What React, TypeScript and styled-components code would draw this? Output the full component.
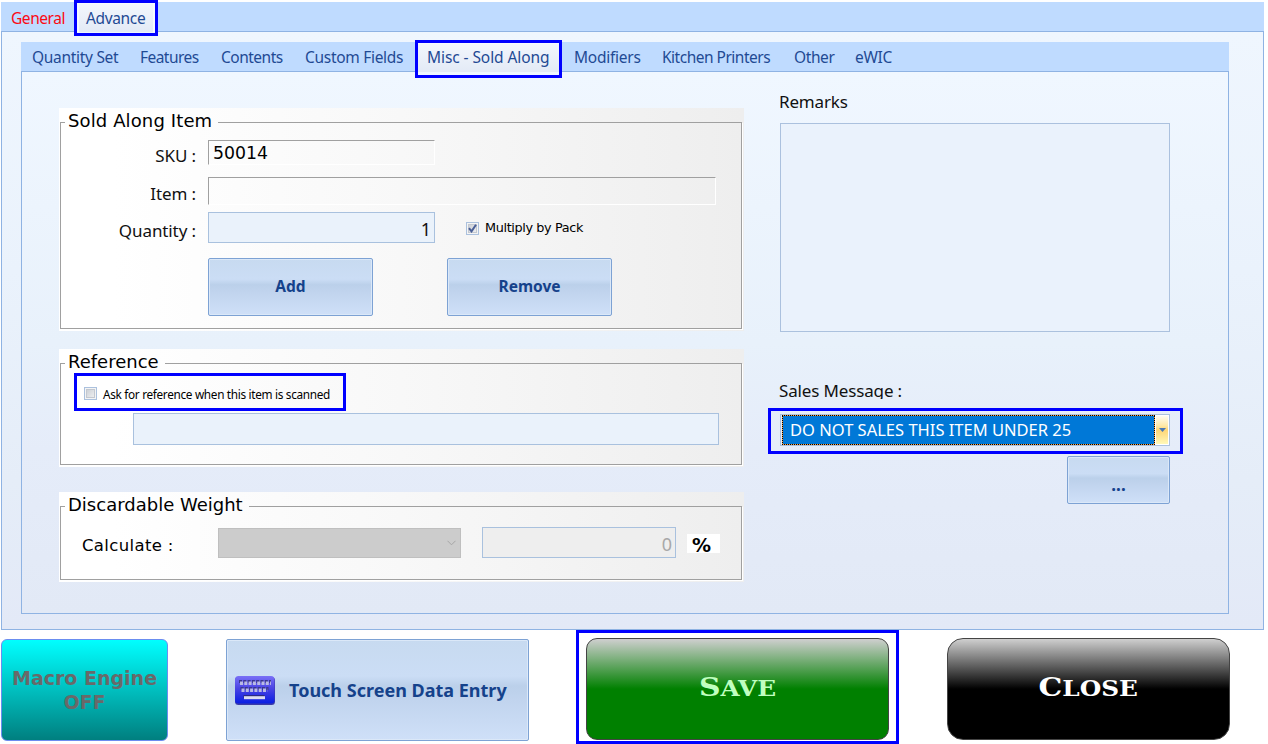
import React from 'react';
import styled, { createGlobalStyle, css } from 'styled-components';

const segoe = `'Noto Sans', 'Open Sans', sans-serif`;
const verdana = `'DejaVu Sans', sans-serif`;

const mainTabs = [
  { title: 'General', width: 76, pad: 10, ls: -0.45, alert: true },
  { title: 'Advance', width: 78, pad: 9, ls: -0.35, active: true },
];

const subTabs = [
  { title: 'Quantity Set', width: 108, pad: 11, ls: -0.3 },
  { title: 'Features', width: 81, pad: 11, ls: -0.55 },
  { title: 'Contents', width: 84, pad: 11, ls: -0.5 },
  { title: 'Custom Fields', width: 121, pad: 11, ls: -0.3 },
  { title: 'Misc - Sold Along', width: 147, pad: 12, ls: -0.08, active: true },
  { title: 'Modifiers', width: 89, pad: 12, ls: -0.25 },
  { title: 'Kitchen Printers', width: 132, pad: 11, ls: -0.5 },
  { title: 'Other', width: 61, pad: 11, ls: -0.4 },
  { title: 'eWIC', width: 59, pad: 11, ls: -0.3 },
];

const KeyboardIcon = () => (
  <svg width="42" height="32" viewBox="0 0 42 32">
    <defs>
      <linearGradient id="keys" x1="0" y1="0" x2="0" y2="1">
        <stop offset="0" stopColor="#7a70f6" />
        <stop offset="0.45" stopColor="#4a44e4" />
        <stop offset="1" stopColor="#0a1ee2" />
      </linearGradient>
    </defs>
    <rect x="1" y="3" width="40" height="28" rx="3.5" fill="#3a3aa8" />
    <rect x="1" y="2" width="39.5" height="27.5" rx="3.5" fill="url(#keys)" />
    <g stroke="#3a388e" strokeWidth="3" strokeDasharray="3 1.3">
      <path d="M5 7.500h32" />
      <path d="M6.500 14.500h28" />
    </g>
    <g stroke="#b9bae4" strokeWidth="3.4" strokeDasharray="3 1.3">
      <path d="M6 9.200h31" />
      <path d="M7.500 16.200h26" />
    </g>
    <path d="M9.500 22.500h21" stroke="#2b2a80" strokeWidth="3" />
    <path d="M10 23.700h21" stroke="#dcdcf2" strokeWidth="3" />
  </svg>
);

const CheckMark = () => (
  <svg width="9" height="9" viewBox="0 0 9 9">
    <path
      d="M1 4.200 L3.500 7.400 L8 0.800"
      fill="none"
      stroke="#4a5f97"
      strokeWidth="2"
    />
  </svg>
);

const App: React.FC = () => {
  return (
    <Screen>
      <GlobalStyle />
      <MainTabs>
        <TabBar>
          {mainTabs.map(tab => (
            <Tab
              key={tab.title}
              $width={tab.width}
              $pad={tab.pad}
              $ls={tab.ls}
              $active={tab.active}
              $alert={tab.alert}
            >
              {tab.title}
            </Tab>
          ))}
        </TabBar>
        <MainPanel>
          <TabBar>
            {subTabs.map(tab => (
              <Tab
                key={tab.title}
                $width={tab.width}
                $pad={tab.pad}
                $ls={tab.ls}
                $active={tab.active}
                $sub
              >
                {tab.title}
              </Tab>
            ))}
          </TabBar>
          <SubPanel>
            <LeftColumn>
              <Group $height={223} $gap={18}>
                <Frame>
                  <Legend $ls={0.12}>Sold Along Item</Legend>
                  <Row $top={4} $height={25}>
                    <Label $drop={4}>SKU :</Label>
                    <SunkenField $width={227}>50014</SunkenField>
                  </Row>
                  <Row $top={12} $height={28}>
                    <Label $drop={5}>Item :</Label>
                    <SunkenField $width={508} />
                  </Row>
                  <Row $top={7} $height={31}>
                    <Label $drop={7}>Quantity :</Label>
                    <Field $width={227}>1</Field>
                    <PackCheck>
                      <CheckBox>
                        <CheckMark />
                      </CheckBox>
                      <PackText>Multiply by Pack</PackText>
                    </PackCheck>
                  </Row>
                  <ButtonRow>
                    <Button $width={165}>Add</Button>
                    <Button $width={165}>Remove</Button>
                  </ButtonRow>
                </Frame>
              </Group>
              <Group $height={118} $gap={25}>
                <Frame>
                  <Legend $ls={0}>Reference</Legend>
                  <AskRow>
                    <CheckBox />
                    <AskText>Ask for reference when this item is scanned</AskText>
                  </AskRow>
                  <ReferenceField $width={586} />
                </Frame>
              </Group>
              <Group $height={90} $gap={0}>
                <Frame>
                  <Legend $ls={0}>Discardable Weight</Legend>
                  <Row $top={7} $height={31}>
                    <CalcLabel>Calculate :</CalcLabel>
                    <DisabledSelect>
                      <svg width="9" height="6" viewBox="0 0 9 6">
                        <path d="M0.500 0.800l4 4 4-4" fill="none" stroke="#a6a6a6" />
                      </svg>
                    </DisabledSelect>
                    <DisabledField $width={194}>0</DisabledField>
                    <Percent>%</Percent>
                  </Row>
                </Frame>
              </Group>
            </LeftColumn>
            <RightColumn>
              <SideLabel $height={24}>Remarks</SideLabel>
              <Remarks />
              <SideLabel $height={20}>Sales Message :</SideLabel>
              <MessageSelect>
                <MessageValue>DO NOT SALES THIS ITEM UNDER 25</MessageValue>
                <MessageArrow>
                  <svg width="7" height="4" viewBox="0 0 7 4">
                    <path d="M0 0h7L3.500 4z" fill="#4a79b5" />
                  </svg>
                </MessageArrow>
              </MessageSelect>
              <MoreButton $width={103}>...</MoreButton>
            </RightColumn>
          </SubPanel>
        </MainPanel>
      </MainTabs>
      <Footer>
        <MacroButton>
          Macro Engine
          <br />
          OFF
        </MacroButton>
        <TouchButton $width={303}>
          <KeyboardIcon />
          <span>Touch Screen Data Entry</span>
        </TouchButton>
        <SaveButton>
          <WideText>
            <Capital>S</Capital>AVE
          </WideText>
        </SaveButton>
        <CloseButton>
          <WideText>
            <Capital>C</Capital>LOSE
          </WideText>
        </CloseButton>
      </Footer>
    </Screen>
  );
};

const GlobalStyle = createGlobalStyle`
  * {
    box-sizing: border-box;
  }
  body {
    margin: 0;
    background: #ffffff;
    overflow: hidden;
  }
`;

// blue marker frame drawn over the part it points at
const marker = (top: number, right: number, bottom: number, left: number) => css`
  position: relative;
  &::after {
    content: '';
    position: absolute;
    top: ${top}px;
    right: ${right}px;
    bottom: ${bottom}px;
    left: ${left}px;
    border: 3px solid #0000ff;
    pointer-events: none;
    z-index: 2;
  }
`;

const Screen = styled.div`
  width: 1268px;
  height: 744px;
  padding: 2px 0 0 1px;
  font-family: ${segoe};
  white-space: nowrap;
  overflow: hidden;
`;

const MainTabs = styled.div`
  width: 1263px;
`;

const TabBar = styled.div`
  display: flex;
  height: 29px;
  background: #bfdbff;
`;

const Tab = styled.div<{
  $width: number;
  $pad: number;
  $ls: number;
  $active?: boolean;
  $alert?: boolean;
  $sub?: boolean;
}>`
  width: ${props => props.$width}px;
  height: 30px;
  padding-left: ${props => props.$pad}px;
  line-height: ${props => (props.$sub ? 31 : 32)}px;
  font-size: 15.5px;
  letter-spacing: ${props => props.$ls}px;
  color: ${props => (props.$alert ? '#fb0a14' : '#1f4a94')};
  ${props =>
    props.$active &&
    css`
      z-index: 1;
      background: linear-gradient(#f3f7fd, #e3eaf6);
      box-shadow: inset 2px 2px 0 #f6faff, inset -2px 0 0 #f6faff;
      ${props.$sub ? marker(-2, 0, -6, 0) : marker(-2, -3, -4, -3)}
    `}
`;

const MainPanel = styled.div`
  height: 599px;
  padding: 10px 34px 0 19px;
  border: 1px solid #8fb3e3;
  background: linear-gradient(#eff6fe, #eaf2fc 40%, #e5edf8 75%, #e3e9f7);
`;

const SubPanel = styled.div`
  display: flex;
  gap: 36px;
  height: 543px;
  padding-left: 37px;
  border: 1px solid #8fb3e3;
  background: linear-gradient(#f0f7ff, #e8f1fb 50%, #e5ecf9 70%, #e2e9f6);
`;

const LeftColumn = styled.div`
  padding-top: 36px;
  width: 685px;
`;

const Group = styled.div<{ $height: number; $gap: number }>`
  height: ${props => props.$height}px;
  margin-bottom: ${props => props.$gap}px;
  padding: 0 2px 2px 1px;
  background: linear-gradient(90deg, #ffffff 8%, #f8f8f8 50%, #eeeeee);
`;

const Frame = styled.fieldset`
  height: 100%;
  min-width: 0;
  margin: 0;
  padding: 0;
  border: 1px solid #a0a0a0;
  box-shadow: 1px 1px 0 #ffffff;
`;

const Legend = styled.legend<{ $ls: number }>`
  height: 28px;
  margin-left: 4px;
  padding: 0 6px 0 3px;
  font-family: ${verdana};
  font-size: 18px;
  line-height: 25px;
  letter-spacing: ${props => props.$ls}px;
  color: #000000;
`;

const Row = styled.div<{ $top: number; $height: number }>`
  display: flex;
  height: ${props => props.$height}px;
  margin-top: ${props => props.$top}px;
`;

const Label = styled.div<{ $drop: number }>`
  width: 135px;
  margin-right: 12px;
  padding-top: ${props => props.$drop}px;
  text-align: right;
  font-size: 17px;
  line-height: 24px;
  letter-spacing: -0.1px;
  color: #111111;
`;

const SunkenField = styled.div<{ $width: number }>`
  width: ${props => props.$width}px;
  padding-left: 4px;
  border: 1px solid;
  border-color: #a0a0a0 #ffffff #ffffff #a0a0a0;
  font-family: ${verdana};
  font-size: 17.3px;
  line-height: 24px;
  color: #000000;
`;

const Field = styled.div<{ $width: number }>`
  width: ${props => props.$width}px;
  padding-right: 3px;
  border: 1px solid #a9c1de;
  background: #eaf2fb;
  text-align: right;
  font-size: 18px;
  line-height: 32px;
  color: #111111;
`;

const CheckBox = styled.span`
  display: flex;
  align-items: center;
  justify-content: center;
  width: 13px;
  height: 13px;
  border: 1px solid #abc1de;
  background: linear-gradient(135deg, #c4c9d0, #f6f6f6);
  box-shadow: inset 0 0 0 1px #f4f4f4, inset 0 0 0 2px #c3c8d0;
`;

const PackCheck = styled.div`
  display: flex;
  align-items: center;
  margin-left: 31px;
  gap: 6px;
  height: 32px;
`;

const PackText = styled.span`
  font-family: ${verdana};
  font-size: 12.8px;
  line-height: 16px;
  letter-spacing: -0.36px;
  color: #000000;
`;

const ButtonRow = styled.div`
  display: flex;
  gap: 74px;
  height: 58px;
  margin: 15px 0 0 147px;
`;

const Button = styled.button<{ $width: number }>`
  display: flex;
  align-items: center;
  justify-content: center;
  width: ${props => props.$width}px;
  padding: 0 0 2px;
  border: 1px solid #7da2d4;
  border-radius: 2px;
  background: linear-gradient(
    #c7daf0,
    #cbddf5 36%,
    #bbd0ea 46%,
    #c1d4ee 60%,
    #cfe0f8
  );
  box-shadow: inset 0 0 0 1px #dbe8f8;
  font-family: ${segoe};
  font-size: 15.5px;
  font-weight: 700;
  color: #15428b;
`;

const AskRow = styled.div`
  ${marker(-14, 0, -11, -10)}
  display: flex;
  align-items: center;
  gap: 6px;
  width: 262px;
  height: 13px;
  margin: 10px 0 0 23px;
`;

const AskText = styled.span`
  font-size: 11.8px;
  letter-spacing: -0.32px;
  color: #000000;
`;

const ReferenceField = styled(Field)`
  height: 32px;
  margin: 13px 0 0 72px;
`;

const CalcLabel = styled.div`
  width: 136px;
  height: 20px;
  margin: 7px 0 0 21px;
  font-family: ${verdana};
  font-size: 16.5px;
  line-height: 23px;
  letter-spacing: 0.35px;
`;

const DisabledSelect = styled.div`
  display: flex;
  align-items: center;
  justify-content: flex-end;
  width: 243px;
  height: 30px;
  margin: 1px 21px 0 0;
  padding-right: 4px;
  border: 1px solid #bfbfbf;
  background: #cccccc;
`;

const DisabledField = styled(Field)`
  background: #eeeeee;
  color: #a8a8a8;
`;

const Percent = styled.div`
  width: 33px;
  height: 19px;
  margin: 7px 0 0 11px;
  padding-left: 5px;
  background: #ffffff;
  font-family: ${verdana};
  font-size: 19px;
  font-weight: 700;
  line-height: 22px;
`;

const RightColumn = styled.div`
  display: flex;
  flex-direction: column;
  width: 390px;
  padding-top: 18px;
`;

const SideLabel = styled.div<{ $height: number }>`
  height: ${props => props.$height}px;
  margin-left: -1px;
  overflow: hidden;
  font-size: 17px;
  line-height: 24px;
  letter-spacing: -0.15px;
  color: #111111;
`;

const Remarks = styled.div`
  height: 209px;
  margin: 9px 0 47px;
  border: 1px solid #abc1de;
  background: #eaf2fc;
`;

const MessageSelect = styled.div`
  ${marker(-7, -14, -9, -13)}
  display: flex;
  height: 32px;
  margin-top: 15px;
  border: 1px solid #abc1de;
`;

const MessageValue = styled.div`
  width: 373px;
  height: 30px;
  margin-left: 1px;
  padding-left: 7px;
  border: 1px dotted #000000;
  background: linear-gradient(#0078d7, #0078d7) padding-box,
    linear-gradient(#ffa040, #ffa040) border-box;
  font-size: 16.5px;
  line-height: 27px;
  color: #ffffff;
`;

const MessageArrow = styled.div`
  flex: 1;
  display: flex;
  align-items: center;
  justify-content: center;
  border: 1px solid #ffffff;
  background: linear-gradient(#fffcf0, #ffe9a8 35%, #ffd676 50%, #fff8b8);
`;

const MoreButton = styled(Button)`
  align-self: flex-end;
  height: 48px;
  margin-top: 10px;
  padding: 8px 0 0;
  font-size: 17px;
`;

const Footer = styled.div`
  display: flex;
  height: 114px;
  padding-top: 8px;
`;

const MacroButton = styled.button`
  width: 167px;
  height: 102px;
  margin-top: 1px;
  padding: 0 0 1px;
  border: 1px solid #6b8df0;
  border-radius: 6px;
  background: linear-gradient(#00ffff, #007f7f);
  font-family: ${verdana};
  font-size: 19px;
  font-weight: 700;
  line-height: 24px;
  color: #696969;
`;

const TouchButton = styled(Button)`
  justify-content: flex-start;
  height: 102px;
  margin: 1px 0 0 58px;
  padding: 0 0 0 7px;
  gap: 13px;
  font-size: 18px;
`;

const GlossButton = styled.button`
  height: 102px;
  padding: 0 0 5px;
  border: 1px solid #444444;
  font-family: 'DejaVu Serif', serif;
  font-size: 21.5px;
  font-weight: 700;
`;

const SaveButton = styled(GlossButton)`
  ${marker(-9, -11, -5, -11)}
  width: 303px;
  margin-left: 57px;
  border-radius: 11px;
  background: linear-gradient(#cfcfcf, #008000 50%);
  color: #c0ffc0;
`;

const CloseButton = styled(GlossButton)`
  width: 283px;
  margin-left: 58px;
  border-radius: 16px;
  background: linear-gradient(#cfcfcf, #000000 50%);
  color: #ffffff;
`;

const WideText = styled.span`
  display: inline-block;
  transform: scaleX(1.15);
`;

const Capital = styled.span`
  font-size: 26px;
`;

export default App;
